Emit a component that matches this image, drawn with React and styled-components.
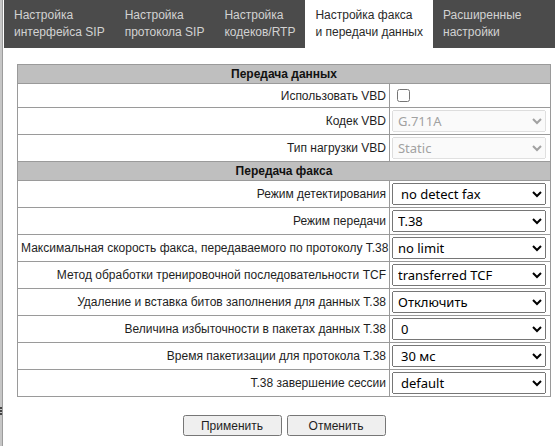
import styled, { createGlobalStyle } from "styled-components";

const GlobalStyle = createGlobalStyle`
  body {
    margin: 0;
    font-family: "Liberation Sans", Arial, sans-serif;
    font-size: 12px;
    color: #222;
    background: #fff;
  }
`;

const tabs = [
  ["Настройка", "интерфейса SIP"],
  ["Настройка", "протокола SIP"],
  ["Настройка", "кодеков/RTP"],
  ["Настройка факса", "и передачи данных"],
  ["Расширенные", "настройки"],
];

const dataRows = [
  { label: "Использовать VBD", check: true },
  { label: "Кодек VBD", value: "G.711A", disabled: true },
  { label: "Тип нагрузки VBD", value: "Static", disabled: true },
];

const faxRows = [
  { label: "Режим детектирования", value: "no detect fax", pad: true },
  { label: "Режим передачи", value: "T.38" },
  { label: "Максимальная скорость факса, передаваемого по протоколу T.38", value: "no limit" },
  { label: "Метод обработки тренировочной последовательности TCF", value: "transferred TCF" },
  { label: "Удаление и вставка битов заполнения для данных T.38", value: "Отключить" },
  { label: "Величина избыточности в пакетах данных T.38", value: "0", pad: true },
  { label: "Время пакетизации для протокола T.38", value: "30 мс", pad: true },
  { label: "T.38 завершение сессии", value: "default", pad: true },
];

const Row = ({ row }) => (
  <tr>
    <Label>{row.label}</Label>
    <Field>
      {row.check ? (
        <Check type="checkbox" />
      ) : (
        <Select disabled={row.disabled} $pad={row.pad} defaultValue={row.value}>
          <option>{row.value}</option>
        </Select>
      )}
    </Field>
  </tr>
);

const App = () => {
  return (
    <Page>
      <GlobalStyle />
      <Splitter />
      <Main>
        <TabBar>
          {tabs.map((t, i) => (
            <Tab key={i} $active={i === 3}>
              {t[0]}
              <br />
              {t[1]}
            </Tab>
          ))}
        </TabBar>
        <Content>
          <Table>
            <colgroup>
              <col />
              <ValueCol />
            </colgroup>
            <tbody>
              <tr>
                <Section colSpan={2}>Передача данных</Section>
              </tr>
              {dataRows.map((r) => (
                <Row key={r.label} row={r} />
              ))}
              <tr>
                <Section colSpan={2}>Передача факса</Section>
              </tr>
              {faxRows.map((r) => (
                <Row key={r.label} row={r} />
              ))}
            </tbody>
          </Table>
          <Buttons>
            <Button>Применить</Button>
            <Button>Отменить</Button>
          </Buttons>
        </Content>
      </Main>
    </Page>
  );
};

export default App;

const Page = styled.div`
  display: flex;
  min-height: 446px;
`;

const Splitter = styled.div`
  position: relative;
  width: 2px;
  flex-shrink: 0;
  background: #c6c6c6;
  border-right: 1px solid #9c9c9c;
  &::after {
    content: "";
    position: absolute;
    left: 0;
    top: 407px;
    width: 2px;
    height: 9px;
    background: repeating-linear-gradient(#444 0 2px, transparent 2px 3px);
  }
`;

const Main = styled.div`
  flex: 1;
  padding-left: 1px;
  display: flex;
  flex-direction: column;
`;

const TabBar = styled.div`
  display: flex;
  background: #4b4b4b;
`;

const Tab = styled.div`
  padding: 7px 10px;
  line-height: 17px;
  font-size: 12px;
  white-space: nowrap;
  color: ${(p) => (p.$active ? "#2a2a2a" : "#d2d2d2")};
  background: ${(p) => (p.$active ? "#fff" : "transparent")};
`;

const Content = styled.div`
  padding: 16px 4px 0 13px;
`;

const Table = styled.table`
  width: 100%;
  border-collapse: collapse;
  table-layout: fixed;
  border: 1px solid #9a9a9a;
`;

const ValueCol = styled.col`
  width: 161px;
`;

const Section = styled.td`
  background: #bfbfbf;
  border: 1px solid #9a9a9a;
  text-align: center;
  font-weight: bold;
  color: #111;
  padding: 2px 3px;
  line-height: 14px;
`;

const Label = styled.td`
  border: 1px solid #9a9a9a;
  text-align: right;
  padding: 2px 3px;
  white-space: nowrap;
  color: #1e1e1e;
`;

const Field = styled.td`
  border: 1px solid #9a9a9a;
  padding: 2px 4px 2px 2px;
`;

const Check = styled.input`
  display: block;
  width: 13px;
  height: 13px;
  margin: 3px 3px 3px 5px;
`;

const Select = styled.select`
  display: block;
  width: 100%;
  height: 22px;
  font-family: "Noto Sans", sans-serif;
  font-size: 13px;
  padding-left: ${(p) => (p.$pad ? "4px" : "1px")};
  margin: 0;
  &:disabled {
    color: #7a7a7a;
  }
`;

const Buttons = styled.div`
  display: flex;
  justify-content: center;
  gap: 5px;
  margin-top: 18px;
`;

const Button = styled.button`
  width: 99px;
  height: 21px;
  font-family: "Liberation Sans", Arial, sans-serif;
  font-size: 12px;
  color: #1e1e1e;
  padding: 0;
`;
